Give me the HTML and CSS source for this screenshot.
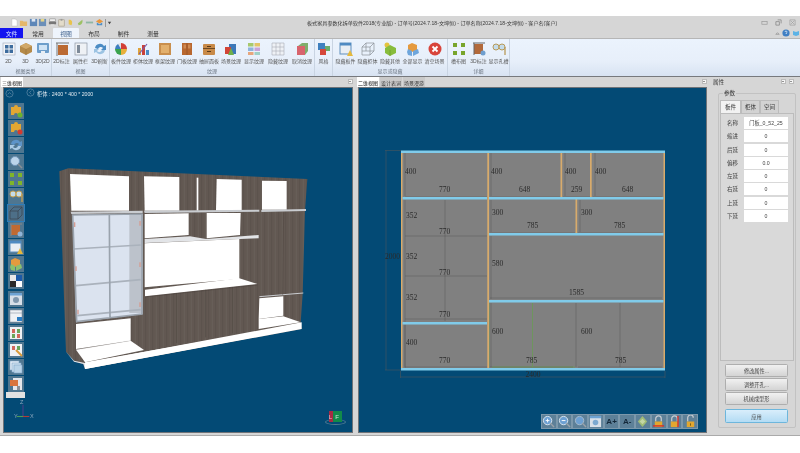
FILE: index.html
```html
<!DOCTYPE html>
<html lang="zh">
<head>
<meta charset="utf-8">
<title>板式家具参数化拆单软件</title>
<link rel="stylesheet" href="styles.css">
</head>
<body>
<div class="topgap"></div>
<div class="app">
  <header class="titlebar">
    <div class="qat">
      <svg class="ico-s" viewBox="0 0 10 10"><path d="M2 1h4l2 2v6H2z" fill="#fff" stroke="#bbb" stroke-width=".6"/></svg>
      <svg class="ico-s" viewBox="0 0 10 10"><path d="M1 3h3l1 1h4v5H1z" fill="#e5b76a"/></svg>
      <svg class="ico-s" viewBox="0 0 10 10"><rect x="1" y="1" width="8" height="8" fill="#5e87b8"/><rect x="3" y="1" width="4" height="3" fill="#dfe7f2"/></svg>
      <svg class="ico-s" viewBox="0 0 10 10"><rect x="1" y="1" width="8" height="8" fill="#6b8fb9"/><rect x="3" y="1" width="4" height="3" fill="#e5d58a"/></svg>
      <svg class="ico-s" viewBox="0 0 10 10"><rect x="2" y="1" width="6" height="3" fill="#eee" stroke="#777" stroke-width=".5"/><rect x="1" y="4" width="8" height="3" fill="#777"/><rect x="3" y="7" width="4" height="2" fill="#ddd"/></svg>
      <svg class="ico-s" viewBox="0 0 10 10"><rect x="2" y="2" width="6" height="7" fill="#e3dccb" stroke="#9a8f7a" stroke-width=".6"/><rect x="4" y="1" width="2" height="2" fill="#999"/></svg>
      <svg class="ico-s" viewBox="0 0 10 10"><path d="M3 2c3-1 5 2 3 6l-3-1z" fill="#e8c34d"/></svg>
      <svg class="ico-s" viewBox="0 0 10 10"><path d="M7 2c1 3-1 6-4 6l-1-2z" fill="#9cc163"/></svg>
      <svg class="ico-s" viewBox="0 0 10 10"><rect x="1" y="4" width="8" height="2" fill="#8fb7a5"/></svg>
      <svg class="ico-s" viewBox="0 0 10 10"><path d="M1 4l4-3 4 3-4 2z" fill="#e8963c"/><path d="M2 5l3 2 3-2v3H2z" fill="#4d8fc7"/></svg>
      <span class="qat-sep"></span>
      <svg class="ico-caret" viewBox="0 0 6 6"><path d="M1 2h4L3 5z" fill="#444"/></svg>
    </div>
    <div class="title">板式家具参数化拆单软件2018(专业版) - 订单号(2024.7.18-文坤恒) - 订单名称(2024.7.18-文坤恒) - 客户名(客户)</div>
    <div class="winctl">
      <svg class="ico-w" viewBox="0 0 8 8"><rect x="1" y="3" width="6" height="3" fill="none" stroke="#999" stroke-width=".8"/></svg>
      <svg class="ico-w" viewBox="0 0 8 8"><path d="M1 3h4v4H1zM3 1h4v4" fill="none" stroke="#888" stroke-width=".9"/></svg>
      <svg class="ico-w" viewBox="0 0 8 8"><path d="M1 1h6v6H1zM2 2l4 4M6 2L2 6" fill="none" stroke="#999" stroke-width=".7"/></svg>
    </div>
  </header>

  <nav class="tabs">
    <span class="tab tab-file">文件</span>
    <span class="tab tab-a">常用</span>
    <span class="tab tab-active">视图</span>
    <span class="tab tab-b">布局</span>
    <span class="tab tab-c">制件</span>
    <span class="tab tab-d">测量</span>
    <span class="tab-right">
      <svg class="ico-caret" viewBox="0 0 6 6"><path d="M1 4l2-2 2 2z" fill="none" stroke="#777" stroke-width=".6"/></svg>
      <svg class="ico-help" viewBox="0 0 8 8"><circle cx="4" cy="4" r="3.6" fill="#3f7fc4"/><path d="M3 3a1 1 0 1 1 1.4 1L4 5" fill="none" stroke="#fff" stroke-width=".7"/></svg>
      <svg class="ico-help" viewBox="0 0 8 8"><path d="M1 2l3 1 3-1v4L4 7 1 6z" fill="#5cb3e6"/></svg>
    </span>
  </nav>

  <section class="ribbon">
    <div class="rgroup g1">
      <div class="ritems">
        <div class="ritem w17"><svg class="ric" viewBox="0 0 14 14"><rect x="1" y="1" width="12" height="12" fill="#f2f4f8" stroke="#9fa9b8" stroke-width=".6"/><path d="M3 3h3.500v3.500H3zM7.500 3H11v3.500H7.500zM3 7.500h3.500V11H3zM7.500 7.500H11V11H7.500z" fill="#3d6c9e"/></svg><span>2D</span></div>
        <div class="ritem w17"><svg class="ric" viewBox="0 0 14 14"><path d="M7 1l6 3v6l-6 3-6-3V4z" fill="#b58a49"/><path d="M1 4l6 3 6-3-6-3z" fill="#d1a868"/><path d="M7 7v6" stroke="#8d6a34" stroke-width=".5"/></svg><span>3D</span></div>
        <div class="ritem w17"><svg class="ric" viewBox="0 0 14 14"><rect x="1" y="1" width="12" height="10" rx="1" fill="#6d9ecb"/><rect x="3" y="3" width="8" height="5" fill="#cfe3f5"/><rect x="5" y="9" width="4" height="4" fill="#e8eef5"/></svg><span>3D|2D</span></div>
      </div>
      <div class="rlabel">视图类型</div>
    </div>
    <div class="rgroup g2">
      <div class="ritems">
        <div class="ritem w19"><svg class="ric" viewBox="0 0 14 14"><rect x="3" y="3" width="10" height="10" fill="#bb6a33"/><path d="M1 1h13M2 1v13" stroke="#777" stroke-width="1"/></svg><span>2D标注</span></div>
        <div class="ritem w19"><svg class="ric" viewBox="0 0 14 14"><rect x="1" y="1" width="12" height="12" fill="#eef1f5" stroke="#8c96a3" stroke-width=".7"/><rect x="3" y="3" width="3" height="8" fill="#7d8a99"/></svg><span>属性栏</span></div>
        <div class="ritem w19"><svg class="ric" viewBox="0 0 14 14"><path d="M2 6a5 5 0 0 1 9-2l2-1v5H8l2-2a3 3 0 0 0-5 1z" fill="#4c8cc4"/><path d="M12 8a5 5 0 0 1-9 2l-2 1V7h5l-2 2a3 3 0 0 0 5-1z" fill="#9cc3e2"/></svg><span>3D刷新</span></div>
      </div>
      <div class="rlabel">视图</div>
    </div>
    <div class="rgroup g3">
      <div class="ritems">
        <div class="ritem w22"><svg class="ric" viewBox="0 0 14 14"><circle cx="7" cy="7" r="6" fill="#dfe3e8"/><path d="M7 7V1a6 6 0 0 1 6 6z" fill="#d23f36"/><path d="M7 7h6a6 6 0 0 1-6 6z" fill="#e7b03c"/><path d="M7 7v6a6 6 0 0 1-6-6z" fill="#3aa34d"/><path d="M7 7H1a6 6 0 0 1 3-5z" fill="#3c7fc1"/></svg><span>板件纹理</span></div>
        <div class="ritem w22"><svg class="ric" viewBox="0 0 14 14"><rect x="2" y="6" width="3" height="7" fill="#e0a33a"/><rect x="6" y="3" width="3" height="10" fill="#c9423a"/><rect x="10" y="8" width="3" height="5" fill="#4b8cc6"/><path d="M3 12L11 2" stroke="#7b5aa8" stroke-width="1.200"/></svg><span>柜体纹理</span></div>
        <div class="ritem w22"><svg class="ric" viewBox="0 0 14 14"><rect x="1" y="1" width="12" height="12" fill="#c98f4e"/><rect x="3" y="3" width="8" height="8" fill="#e2b06e"/></svg><span>框架纹理</span></div>
        <div class="ritem w22"><svg class="ric" viewBox="0 0 14 14"><rect x="2" y="1" width="10" height="12" fill="#b8672f"/><path d="M7 1v12" stroke="#8a4a1e" stroke-width=".6"/><rect x="3.500" y="2.500" width="2.500" height="4" fill="#d08a52"/><rect x="8" y="2.500" width="2.500" height="4" fill="#d08a52"/></svg><span>门板纹理</span></div>
        <div class="ritem w22"><svg class="ric" viewBox="0 0 14 14"><rect x="1" y="2" width="12" height="11" rx="1" fill="#c88a48"/><rect x="1" y="6" width="12" height="1" fill="#6f4a22"/><rect x="5" y="4" width="4" height="1" fill="#5a3a18"/><rect x="5" y="9" width="4" height="1" fill="#5a3a18"/></svg><span>抽屉面板</span></div>
        <div class="ritem w22"><svg class="ric" viewBox="0 0 14 14"><path d="M5 2h7v10H5z" fill="#3d78b8"/><path d="M1 5h6v7H1z" fill="#d24436"/><path d="M7 6l3 7H4z" fill="#6fb04a"/></svg><span>场景纹理</span></div>
        <div class="ritem w24"><svg class="ric" viewBox="0 0 14 14"><rect x="1" y="1" width="5.500" height="3.500" fill="#a7c96d"/><rect x="7.500" y="1" width="5.500" height="3.500" fill="#e3c468"/><rect x="1" y="5.500" width="5.500" height="3.500" fill="#8fb4dc"/><rect x="7.500" y="5.500" width="5.500" height="3.500" fill="#c9a3d8"/><rect x="1" y="10" width="5.500" height="3" fill="#e7a67c"/><rect x="7.500" y="10" width="5.500" height="3" fill="#9ed0c6"/></svg><span>显示纹理</span></div>
        <div class="ritem w24"><svg class="ric" viewBox="0 0 14 14"><path d="M1 1h12v12H1zM1 5h12M1 9h12M5 1v12M9 1v12" fill="#eef1f5" stroke="#a7adb5" stroke-width=".6"/></svg><span>隐藏纹理</span></div>
        <div class="ritem w24"><svg class="ric" viewBox="0 0 14 14"><path d="M3 4l4-3h6v8l-3 4H3z" fill="#7fae6c"/><rect x="2" y="4" width="8" height="9" fill="#d8646d"/></svg><span>取消纹理</span></div>
      </div>
      <div class="rlabel">纹理</div>
    </div>
    <div class="rgroup g4">
      <div class="ritems">
        <div class="ritem w19"><svg class="ric" viewBox="0 0 14 14"><rect x="1" y="1" width="7" height="7" fill="#3f80bf"/><rect x="8" y="4" width="5" height="5" fill="#6bad6a"/><rect x="3" y="7" width="6" height="6" fill="#d5483a"/></svg><span>风格</span></div>
      </div>
    </div>
    <div class="rgroup g5">
      <div class="ritems">
        <div class="ritem w22"><svg class="ric" viewBox="0 0 14 14"><rect x="1" y="1" width="11" height="11" fill="#e9eef4" stroke="#5f8fbe"/><rect x="1" y="1" width="11" height="2.500" fill="#4f8ac2"/><path d="M11 8l3 6H8z" fill="#e5b93c"/></svg><span>隐藏板件</span></div>
        <div class="ritem w22"><svg class="ric" viewBox="0 0 14 14"><path d="M1 5l4-4h8v8l-4 4H1zM1 5h8v8M9 5l4-4M5 1v8H1M5 9h8" fill="none" stroke="#8a8f96" stroke-width=".7"/></svg><span>隐藏柜体</span></div>
        <div class="ritem w23"><svg class="ric" viewBox="0 0 14 14"><circle cx="4" cy="3" r="2.500" fill="#e4c33f"/><path d="M2 6l5-3 6 3v5l-6 3-5-3z" fill="#88bd3d"/><path d="M7 8v6" stroke="#5d8c24" stroke-width=".5"/></svg><span>隐藏其他</span></div>
        <div class="ritem w22"><svg class="ric" viewBox="0 0 14 14"><path d="M6 1l5 2v5l-5 2-4-2V3z" fill="#e59a3e"/><path d="M2 7l4 2v5l-4-1-1-3zM7 9l5-2 1 4-6 3z" fill="#6ea6dc"/></svg><span>全部显示</span></div>
        <div class="ritem w22"><svg class="ric" viewBox="0 0 14 14"><circle cx="7" cy="7" r="6.500" fill="#d8443b"/><path d="M4.500 4.500l5 5M9.500 4.500l-5 5" stroke="#fff" stroke-width="1.800"/></svg><span>清空场景</span></div>
      </div>
      <div class="rlabel">显示或隐藏</div>
    </div>
    <div class="rgroup g6">
      <div class="ritems">
        <div class="ritem w20"><svg class="ric" viewBox="0 0 14 14"><path d="M1 1h4v4H1zM9 1h4v4H9zM1 9h4v4H1zM9 9h4v4H9z" fill="#78a52c"/></svg><span>槽布图</span></div>
        <div class="ritem w20"><svg class="ric" viewBox="0 0 14 14"><rect x="2" y="2" width="9" height="10" fill="#b2693a"/><path d="M1 1h12M2 1v12" stroke="#666"/><circle cx="11" cy="11" r="2.500" fill="#6f9fcf"/></svg><span>3D标注</span></div>
        <div class="ritem w20"><svg class="ric" viewBox="0 0 14 14"><circle cx="4" cy="5" r="3" fill="#c4dceb" stroke="#b89a58"/><circle cx="10" cy="5" r="3" fill="#c4dceb" stroke="#b89a58"/><path d="M13 5v8" stroke="#b89a58" stroke-width="1.300"/></svg><span>显示孔槽</span></div>
      </div>
      <div class="rlabel">详细</div>
    </div>
  </section>

  <main class="workspace">
    <section class="pane pane-3d">
      <div class="pane-head">
        <span class="pane-tab pane-tab-on">三维视图</span>
        <span class="pin"></span>
      </div>
      <div class="viewport">
        <div class="v-info">
          <svg class="v-circle" viewBox="0 0 10 10"><circle cx="5" cy="5" r="4" fill="none" stroke="#7fa0b8" stroke-width=".6"/><path d="M3 6l2-2 2 2" fill="none" stroke="#7fa0b8" stroke-width=".6"/></svg>
          <svg class="v-circle v-circle2" viewBox="0 0 10 10"><circle cx="5" cy="5" r="4" fill="none" stroke="#7fa0b8" stroke-width=".6"/><path d="M6 3L4 5l2 2" fill="none" stroke="#7fa0b8" stroke-width=".6"/></svg>
          <span class="v-text">柜体 : 2400 * 400 * 2000</span>
        </div>

        <svg class="cabinet" viewBox="0 0 810 660">
          <defs>
            <pattern id="wood" width="21" height="90" patternUnits="userSpaceOnUse">
              <rect width="21" height="90" fill="#625852"/>
              <path d="M4 0v90" stroke="#6a605a" stroke-width="2.500"/>
              <path d="M14 0v90" stroke="#5a504b" stroke-width="2.500"/>
            </pattern>
          </defs>
          <path d="M28 37L55 28L772 60L765 155L758 405L752 490L755 510L105 630L100 615L72 605L48 578Z" fill="url(#wood)"/>
          <path d="M105 612L755 490L755 510L105 630Z" fill="#fff"/>
          <path d="M48 578L72 605L105 612L105 630L100 615L72 608Z" fill="#e8e8ec"/>
          <path d="M60 45L237 52V155H64Z" fill="#fff"/>
          <path d="M282 52L388 54V155H284Z" fill="#fff"/>
          <path d="M440 56L445 56V155H440Z" fill="#fff"/>
          <path d="M500 60L575 62V155H498Z" fill="#fff"/>
          <path d="M636 65L710 66V152H636Z" fill="#fff"/>
          <path d="M62 158L278 155L278 162L64 165Z" fill="#c9ccd0"/>
          <path d="M282 155L628 152V158L284 162Z" fill="#c9ccd0"/>
          <path d="M634 153L768 150V156L634 159Z" fill="#c9ccd0"/>
          <path d="M284 165L416 163V228L284 238Z" fill="#fff"/>
          <path d="M470 162H572L570 228L470 238Z" fill="#fff"/>
          <path d="M284 240L420 232L468 240L626 228V238L284 252Z" fill="#e2e4e7"/>
          <path d="M284 253L568 240V360L284 385Z" fill="#fff"/>
          <path d="M285 392L568 358L622 375L285 412Z" fill="#fff"/>
          <path d="M380 402V552M467 392V535M548 384V523" stroke="#453c37" stroke-width="1.200"/>
          <path d="M285 414L622 378" stroke="#3f3733" stroke-width="1"/>
          <path d="M68 168L278 165L278 465L78 490Z" fill="#dbe3ef"/>
          <path d="M238 168L275 165L275 462L238 462Z" fill="#bcc2cb"/>
          <path d="M70 270L272 258M78 380L272 362M82 470L272 452" stroke="#aab2bc" stroke-width="5"/>
          <path d="M68 168L276 165L276 465L80 488ZM178 168L180 475" fill="none" stroke="#9aa3ad" stroke-width="5"/>
          <path d="M72 190h4v14h-4zM76 322h4v14h-4zM82 452h4v14h-4zM268 186h4v14h-4zM268 310h4v14h-4zM268 430h4v14h-4z" fill="#d69c90"/>
          <path d="M78 495L242 478V545L78 570Z" fill="#fff"/>
          <path d="M78 572L242 545L282 573L105 610Z" fill="#fff"/>
          <path d="M78 572L242 545" stroke="#c8c8c8"/>
          <path d="M105 610L625 518V532L105 630Z" fill="#fff"/>
          <path d="M628 418L700 412V470L626 480Z" fill="#fff"/>
          <path d="M626 480L700 472L752 490L626 510Z" fill="#fff"/>
          <path d="M628 413L760 402" stroke="#c9ccd0" stroke-width="3"/>
          <path d="M701 160L698 408" stroke="#453c37"/>
        </svg>

        <div class="sidetool">
          <span class="st"><svg viewBox="0 0 14 14"><path d="M2 3h3a2 2 0 0 1 4 0h3v8H9a2 2 0 0 0-4 0H2z" fill="#e3a732"/><circle cx="11" cy="11" r="2.500" fill="#6bb32e"/></svg></span>
          <span class="st"><svg viewBox="0 0 14 14"><path d="M2 3h3a2 2 0 0 1 4 0h3v8H9a2 2 0 0 0-4 0H2z" fill="#e3a732"/><circle cx="11" cy="11" r="2.500" fill="#d63a30"/></svg></span>
          <span class="st"><svg viewBox="0 0 14 14"><path d="M2 6a5 5 0 0 1 9-2l2-1v5H8l2-2a3 3 0 0 0-5 1z" fill="#5d94c8"/><path d="M12 8a5 5 0 0 1-9 2l-2 1V7h5l-2 2a3 3 0 0 0 5-1z" fill="#a9cae4"/></svg></span>
          <span class="st"><svg viewBox="0 0 14 14"><circle cx="6" cy="6" r="4.500" fill="#bcd4ea" stroke="#6f94b8"/><path d="M9 9l4 4" stroke="#8a8f96" stroke-width="1.500"/></svg></span>
          <span class="st"><svg viewBox="0 0 14 14"><path d="M1 1h4v4H1zM9 1h4v4H9zM1 9h4v4H1zM9 9h4v4H9z" fill="#7fb52a"/></svg></span>
          <span class="st"><svg viewBox="0 0 14 14"><circle cx="4" cy="5" r="3" fill="#c4dceb" stroke="#c5a050"/><circle cx="10" cy="5" r="3" fill="#c4dceb" stroke="#c5a050"/><path d="M13 5v8" stroke="#c5a050" stroke-width="1.300"/></svg></span>
          <span class="st st-on"><svg viewBox="0 0 14 14"><path d="M1 5l4-4h8v8l-4 4H1zM1 5h8v8M9 5l4-4" fill="none" stroke="#39444e" stroke-width=".7"/></svg></span>
          <span class="st"><svg viewBox="0 0 14 14"><rect x="2" y="2" width="9" height="10" fill="#c06a32"/><path d="M1 1h12M2 1v12" stroke="#888"/><circle cx="11" cy="11" r="2.500" fill="#8fb4d8"/></svg></span>
          <span class="st"><svg viewBox="0 0 14 14"><rect x="1" y="1" width="11" height="11" fill="#e9eef4" stroke="#5f8fbe"/><rect x="1" y="1" width="11" height="2.500" fill="#4f8ac2"/><path d="M11 8l3 6H8z" fill="#e5b93c"/></svg></span>
          <span class="st"><svg viewBox="0 0 14 14"><path d="M6 1l5 2v5l-5 2-4-2V3z" fill="#e59a3e"/><path d="M2 7l4 2v5l-4-1-1-3zM7 9l5-2 1 4-6 3z" fill="#8bbf6e"/></svg></span>
          <span class="st"><svg viewBox="0 0 14 14"><rect x="1" y="1" width="6" height="6" fill="#e8e8e8"/><rect x="7" y="1" width="6" height="6" fill="#1c5aa8"/><rect x="1" y="7" width="6" height="6" fill="#2a2a2a"/><rect x="7" y="7" width="6" height="6" fill="#fff"/></svg></span>
          <span class="st"><svg viewBox="0 0 14 14"><rect x="1" y="1" width="12" height="12" fill="#d7dfe8"/><rect x="1" y="1" width="12" height="2.500" fill="#6da3d4"/><circle cx="7" cy="8" r="3" fill="#7f97ad"/></svg></span>
          <span class="st"><svg viewBox="0 0 14 14"><rect x="1" y="1" width="12" height="12" fill="#eef1f5" stroke="#8c96a3" stroke-width=".6"/><path d="M1 4h12" stroke="#8c96a3" stroke-width=".6"/><rect x="8" y="8" width="5" height="4" fill="#2a7cc2"/></svg></span>
          <span class="st"><svg viewBox="0 0 14 14"><rect x="1" y="1" width="12" height="12" fill="#eef1f5"/><path d="M3 3h3v4H3zM8 8h3v4H8z" fill="#d2675e"/><path d="M8 3h3v4H8zM3 8h3v4H3z" fill="#6aa55a"/></svg></span>
          <span class="st"><svg viewBox="0 0 14 14"><rect x="1" y="1" width="12" height="12" fill="#eef1f5"/><path d="M3 3h3v4H3z" fill="#d2675e"/><path d="M8 3h3v4H8z" fill="#6aa55a"/><path d="M7 7l6 6" stroke="#d89a3a" stroke-width="2"/></svg></span>
          <span class="st"><svg viewBox="0 0 14 14"><rect x="1" y="1" width="9" height="9" fill="#e8f0f8" stroke="#7fa7c9" stroke-width=".6"/><rect x="3" y="3" width="9" height="9" fill="#cfe1f0" stroke="#7fa7c9" stroke-width=".6"/><rect x="5" y="5" width="8" height="8" fill="#b8d3e8" stroke="#7fa7c9" stroke-width=".6"/></svg></span>
          <span class="st"><svg viewBox="0 0 14 14"><rect x="4" y="1" width="9" height="12" fill="#e4e6ea"/><rect x="1" y="3" width="8" height="6" fill="#d9743c"/><rect x="8" y="9" width="3" height="4" fill="#8a8f96"/></svg></span>
          <span class="st-grip"></span>
        </div>

        <div class="axis">
          <span class="ax-z">Z</span>
          <svg class="ax-svg" viewBox="0 0 20 20"><path d="M10 2v13" stroke="#4b3f8a" stroke-width="1.200"/><path d="M10 15H3" stroke="#4f9a58" stroke-width="1.200"/><path d="M10 15h7" stroke="#b23a3a" stroke-width="1.200"/></svg>
          <span class="ax-y">Y</span>
          <span class="ax-x">X</span>
        </div>

        <div class="cube">
          <span class="cube-ring"></span>
          <span class="cube-l">L</span><span class="cube-f">F</span>
        </div>
      </div>
    </section>

    <section class="pane pane-2d">
      <div class="pane-head">
        <span class="pane-tab pane-tab-on">二维视图</span>
        <span class="pane-tab">设计表词</span>
        <span class="pane-tab">场景漫游</span>
        <span class="pin"></span>
      </div>
      <div class="viewport">
        <svg class="elev" viewBox="359 88 347 345">
          <rect x="401" y="152" width="264" height="217" fill="#808080"/>
          <g class="dims">
            <path d="M385 150.500H401M385 370H401M386 150.500V370M400.500 371V378M665 371V378M400.500 377H665"/>
            <path d="M405 153V196M405 200V369M491 153V196M565 153V196M595 153V196M405 197H487M490 197H560M563 197H590M593 197H662"/>
            <path d="M491 200V232M580 200V232M490 233H575M578 233H662M405 236H487M445 200V321M405 276H487M405 319H487"/>
            <path d="M491 236V299M490 298H662M491 303V367M576 303V367M620 303V367M405 325V367M405 367H487M490 367H573M578 367H662"/>
          </g>
          <path d="M532.500 303V367M489 303V367M492 367H575" stroke="#6a9a55" stroke-width=".8" fill="none"/>
          <g class="tan">
            <rect x="401" y="153" width="1.500" height="216"/>
            <rect x="487.300" y="153" width="1.700" height="216"/>
            <rect x="663.500" y="153" width="1.500" height="216"/>
            <rect x="560.500" y="153" width="1.700" height="45"/>
            <rect x="590" y="153" width="1.700" height="45"/>
            <rect x="575.500" y="199" width="1.700" height="35"/>
          </g>
          <g class="blue">
            <rect x="401" y="150.500" width="264" height="2.500"/>
            <rect x="402.500" y="197" width="84.500" height="2.500"/>
            <rect x="489" y="197" width="174.500" height="2.500"/>
            <rect x="489" y="233" width="174.500" height="2.500"/>
            <rect x="489" y="300" width="174.500" height="2.500"/>
            <rect x="402.500" y="322" width="84.500" height="2.500"/>
            <rect x="401" y="368" width="264" height="2.500"/>
          </g>
          <g class="lbl">
            <text x="405" y="174">400</text><text x="491" y="174">400</text><text x="565" y="174">400</text><text x="595" y="174">400</text>
            <text x="439" y="192">770</text><text x="519" y="192">648</text><text x="571" y="192">259</text><text x="622" y="192">648</text>
            <text x="406" y="218">352</text><text x="492" y="215">300</text><text x="581" y="215">300</text>
            <text x="527" y="228">785</text><text x="614" y="228">785</text>
            <text x="439" y="234">770</text><text x="385" y="259">2000</text><text x="406" y="259">352</text>
            <text x="492" y="266">580</text><text x="439" y="275">770</text><text x="406" y="300">352</text>
            <text x="569" y="295">1585</text><text x="439" y="317">770</text>
            <text x="492" y="334">600</text><text x="581" y="334">600</text><text x="406" y="345">400</text>
            <text x="439" y="363">770</text><text x="526" y="363">785</text><text x="615" y="363">785</text>
            <text x="525.500" y="377">2400</text>
          </g>
        </svg>

        <div class="viewtool">
          <span class="vt"><svg viewBox="0 0 14 14"><circle cx="6" cy="6" r="4.500" fill="#6da0d2" stroke="#dfe8f1"/><path d="M9 9l4 4" stroke="#9aa2aa" stroke-width="1.500"/><path d="M4 6h4M6 4v4" stroke="#fff"/></svg></span>
          <span class="vt"><svg viewBox="0 0 14 14"><circle cx="6" cy="6" r="4.500" fill="#6da0d2" stroke="#dfe8f1"/><path d="M9 9l4 4" stroke="#9aa2aa" stroke-width="1.500"/><path d="M4 6h4" stroke="#fff"/></svg></span>
          <span class="vt"><svg viewBox="0 0 14 14"><circle cx="6" cy="6" r="4.500" fill="#6da0d2" stroke="#a9bccd"/><path d="M9 9l4 4" stroke="#9aa2aa" stroke-width="1.500"/></svg></span>
          <span class="vt"><svg viewBox="0 0 14 14"><rect x="1" y="1" width="12" height="12" fill="#d9e0e8"/><rect x="1" y="1" width="12" height="2.500" fill="#6da3d4"/><circle cx="7" cy="8" r="3" fill="#7da9d0"/></svg></span>
          <span class="vt vt-txt">A+</span>
          <span class="vt vt-txt">A-</span>
          <span class="vt"><svg viewBox="0 0 14 14"><path d="M7 1l5 6-5 6-5-6z" fill="#9fbb76"/><path d="M4 7l3-3 3 3-3 3z" fill="#c4d6a4"/></svg></span>
          <span class="vt"><svg viewBox="0 0 14 14"><path d="M4 7V4a3 3 0 0 1 6 0v3" fill="none" stroke="#c8ccd2" stroke-width="1.300"/><rect x="3" y="7" width="8" height="6" fill="#e2a730"/><rect x="1" y="11" width="12" height="1.500" fill="#d6322a"/></svg></span>
          <span class="vt"><svg viewBox="0 0 14 14"><path d="M4 7V4a3 3 0 0 1 6 0v3" fill="none" stroke="#c8ccd2" stroke-width="1.300"/><rect x="3" y="7" width="8" height="6" fill="#e2a730"/><rect x="10" y="1" width="1.500" height="12" fill="#d6322a"/></svg></span>
          <span class="vt"><svg viewBox="0 0 14 14"><path d="M4 7V3a3 3 0 0 1 6 0" fill="none" stroke="#c8ccd2" stroke-width="1.300"/><rect x="3" y="7" width="8" height="6" fill="#e2a730"/><rect x="6.500" y="9" width="1" height="2.500" fill="#7a5a10"/></svg></span>
        </div>
      </div>
    </section>

    <aside class="props">
      <div class="props-head">
        <span>属性</span>
        <span class="pin"></span>
        <span class="pin pin2"></span>
      </div>
      <div class="groupbox">
        <span class="legend">参数</span>
        <div class="ptabs">
          <span class="ptab ptab-on">板件</span>
          <span class="ptab">柜体</span>
          <span class="ptab">空间</span>
        </div>
        <div class="ptab-body">
          <div class="frow"><label>名称</label><span class="fval">门板_0_52_25</span></div>
          <div class="frow"><label>缩进</label><span class="fval">0</span></div>
          <div class="frow"><label>后延</label><span class="fval">0</span></div>
          <div class="frow"><label>偏移</label><span class="fval">0.0</span></div>
          <div class="frow"><label>左延</label><span class="fval">0</span></div>
          <div class="frow"><label>右延</label><span class="fval">0</span></div>
          <div class="frow"><label>上延</label><span class="fval">0</span></div>
          <div class="frow"><label>下延</label><span class="fval">0</span></div>
        </div>
        <div class="actions">
          <button class="btn">修改属性...</button>
          <button class="btn">调整开孔...</button>
          <button class="btn">机械成型形</button>
          <button class="btn btn-apply">应用</button>
        </div>
      </div>
    </aside>
  </main>
</div>
</body>
</html>
```
FILE: styles.css
```css
* { box-sizing: border-box; }
html, body { margin: 0; padding: 0; background: #fff; }
body { width: 800px; height: 453px; overflow: hidden; font-family: "Liberation Sans", "Noto Sans CJK SC", sans-serif; font-size: 6px; color: #333; }
svg { display: block; }
.topgap { height: 16px; background: #fff; }
.app { height: 420px; display: flex; flex-direction: column; background: #d6d6d6; filter: blur(0.4px); border-bottom: 1px solid #aaa; }

.titlebar { height: 12px; flex: none; display: flex; align-items: center; padding: 1px 3px 0 10px; position: relative; background: #d6d6d6; }
.qat { display: flex; align-items: center; gap: 0.400px; }
.ico-s { width: 9px; height: 9px; }
.qat-sep { width: 1px; height: 8px; background: #999; margin: 0 1px; }
.ico-caret { width: 5px; height: 5px; }
.title { position: absolute; left: 307px; top: 3px; width: 260px; white-space: nowrap; font-size: 5.100px; color: #3a3a3a; }
.winctl { margin-left: auto; display: flex; gap: 7px; padding-right: 1px; }
.ico-w { width: 7px; height: 7px; }

.tabs { height: 10px; flex: none; display: flex; align-items: stretch; position: relative; }
.tab { display: flex; align-items: center; justify-content: center; font-size: 5.800px; color: #333; }
.tab-file { width: 23px; background: #1414f0; color: #d6e0ff; }
.tab-a { width: 30px; }
.tab-active { width: 26px; background: #eef4fc; color: #3a5e8a; border-radius: 1px 1px 0 0; }
.tab-b { width: 30px; }
.tab-c { width: 29px; }
.tab-d { width: 30px; }
.tab-right { margin-left: auto; display: flex; align-items: center; gap: 2px; padding-right: 0; }
.ico-help { width: 8px; height: 8px; }

.ribbon { height: 39px; flex: none; display: flex; border-top: 1px solid #b6b6b6; border-bottom: 1.500px solid #77797d; background: linear-gradient(#ebf3fd, #e7effa 60%, #d8e3f2); }
.rgroup { display: flex; flex-direction: column; border-right: 1px solid #c9d4e2; height: 100%; }
.g1 { width: 52px; }
.g2 { width: 58px; }
.g3 { width: 205px; }
.g4 { width: 18px; }
.g5 { width: 115px; }
.g6 { width: 62px; border-right: 1px solid #c9d4e2; }
.ritems { display: flex; flex: 1; justify-content: center; padding-top: 3px; }
.ritem { display: flex; flex-direction: column; align-items: center; }
.ritem span { font-size: 5px; color: #555; white-space: nowrap; margin-top: 2px; line-height: 7px; }
.ric { width: 14px; height: 14px; }
.w17 { width: 17px; } .w19 { width: 19px; } .w20 { width: 20px; } .w22 { width: 22px; } .w23 { width: 23px; } .w24 { width: 24px; }
.rlabel { height: 9px; flex: none; text-align: center; font-size: 5px; line-height: 8px; color: #6a7480; }

.workspace { flex: 1; display: flex; min-height: 0; }
.pane { display: flex; flex-direction: column; }
.pane-3d { width: 355px; padding: 0 2px 2px 3px; }
.pane-2d { width: 354px; padding: 0 2px 2px 3px; }
.pane-head { height: 10px; flex: none; display: flex; align-items: stretch; gap: 1px; position: relative; margin-left: -2px; }
.pane-2d .pane-head { margin-left: -1px; }
.pane-tab { font-size: 5px; padding: 0 1px; display: flex; align-items: center; background: #c9c9c9; color: #333; }
.pane-tab-on { background: #fff; color: #111; }
.pin { position: absolute; right: 0; top: 1.500px; width: 5px; height: 5px; background: #f5f5f5; border: 1px solid #bbb; }
.pin::after { content: ""; position: absolute; left: 0; top: 1px; border: 1.500px solid transparent; border-top-color: #333; }
.viewport { flex: 1; position: relative; background: #034a75; border: 1px solid #6f7378; overflow: hidden; }

.v-info { position: absolute; left: 0; top: 0; width: 200px; height: 14px; }
.v-circle { position: absolute; left: 1px; top: 1px; width: 9px; height: 9px; }
.v-circle2 { left: 22px; top: 0; }
.v-text { position: absolute; left: 33px; top: 2.500px; font-size: 5.200px; line-height: 7px; color: #dfe8ef; white-space: nowrap; }
.cabinet { position: absolute; left: 46px; top: 71px; width: 270px; height: 220px; }

.sidetool { position: absolute; left: 3px; top: 15px; width: 17px; display: flex; flex-direction: column; align-items: center; }
.st { width: 16px; height: 16px; margin-bottom: 1.060px; display: flex; align-items: center; justify-content: center; background: #4f7690; }
.st svg { width: 14px; height: 14px; }
.st-on { background: #4d6f88; outline: 1px solid #2f7db8; }
.st-grip { width: 19px; height: 6px; margin-top: -1px; background: #e2e2e2; }

.axis { position: absolute; left: 10px; top: 311px; width: 24px; height: 24px; color: #8ea9c0; font-size: 5.500px; }
.ax-svg { position: absolute; left: 0; top: 4px; width: 18px; height: 18px; }
.ax-z { position: absolute; left: 6px; top: 0; }
.ax-y { position: absolute; left: 0; top: 14px; }
.ax-x { position: absolute; left: 16px; top: 14px; }

.cube { position: absolute; left: 321px; top: 323px; width: 20px; height: 16px; display: flex; justify-content: center; }
.cube-ring { position: absolute; left: 0; top: 8px; width: 21px; height: 6px; border: 1.500px solid #4f7992; border-radius: 50%; }
.cube-l, .cube-f { position: relative; height: 11px; display: flex; align-items: center; justify-content: center; font-size: 6px; }
.cube-l { width: 4px; background: #a82a45; color: #e8c0c8; }
.cube-f { width: 9px; background: #128a4a; color: #cfe9dc; }

.elev { position: absolute; left: 0; top: 0; width: 347px; height: 345px; }
.dims path { fill: none; stroke: #585858; stroke-width: .5; }
.tan rect { fill: #d8ab6c; }
.blue rect { fill: #80cbea; }
.lbl text { font-family: "Liberation Serif", serif; font-size: 7.500px; fill: #2a2a2a; }

.viewtool { position: absolute; left: 182px; top: 326px; display: flex; gap: 0; }
.vt { width: 15.700px; height: 15px; display: flex; align-items: center; justify-content: center; background: #5d8098; border: .5px solid #7c98ab; }
.vt svg { width: 13px; height: 13px; }
.vt-txt { font-size: 8px; font-weight: 700; color: #14283a; }

.props { flex: 1; padding: 0 3px 2px 3px; background: #d6d6d6; min-width: 0; }
.props-head { height: 10px; display: flex; align-items: center; padding-left: 1px; position: relative; font-size: 5.500px; }
.props-head .pin { right: 11px; top: 2px; }
.props-head .pin2 { right: 3px; }
.groupbox { height: 335px; margin: 6px 1px 0 6px; border: 1px solid #c2c2c2; border-radius: 2px; position: relative; padding: 6px 1px 0 1px; display: flex; flex-direction: column; }
.legend { position: absolute; left: 4px; top: -4px; background: #d6d6d6; padding: 0 1px; font-size: 5.500px; line-height: 7px; }
.ptabs { display: flex; height: 13px; flex: none; }
.ptab { width: 19px; display: flex; align-items: center; justify-content: center; font-size: 5.500px; background: #d2d2d2; border: 1px solid #bcbcbc; border-bottom: 0; }
.ptab-on { width: 21px; background: #f2f2f2; }
.ptab-body { height: 248px; flex: none; border: 1px solid #bcbcbc; background: #d9d9d9; padding: 3px 5px 0 6px; display: flex; flex-direction: column; gap: 1.300px; }
.frow { display: flex; align-items: center; height: 12px; flex: none; }
.frow label { width: 17px; font-size: 5.500px; color: #444; }
.fval { width: 44px; height: 12px; background: #fff; text-align: center; font-size: 5.200px; line-height: 12px; color: #444; white-space: nowrap; }
.actions { display: flex; flex-direction: column; gap: 1px; margin: 3px 0 0 5px; width: 63px; }
.btn { height: 13px; padding: 0; font: inherit; font-size: 5.200px; color: #444; background: linear-gradient(#f1f1f1, #d4d4d4); border: 1px solid #aeaeae; border-radius: 1.500px; }
.btn-apply { margin-top: 3px; height: 14px; background: linear-gradient(#d9eefb, #b3dcf4); border-color: #6db6dc; }
```
